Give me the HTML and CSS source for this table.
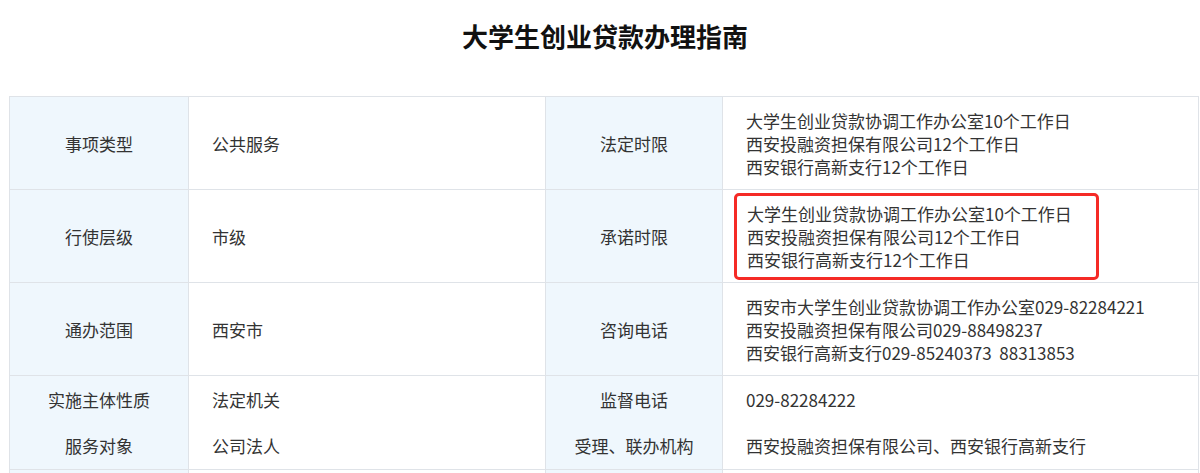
FILE: index.html
```html
<!DOCTYPE html>
<html lang="zh-CN">
<head>
<meta charset="utf-8">
<title>大学生创业贷款办理指南</title>
<link rel="stylesheet" href="styles.css">
</head>
<body>
<div class="page">
  <h1 class="title">大学生创业贷款办理指南</h1>
  <table class="guide">
    <colgroup>
      <col class="c1"><col class="c2"><col class="c3"><col class="c4">
    </colgroup>
    <tbody>
      <tr>
        <th>事项类型</th>
        <td>公共服务</td>
        <th>法定时限</th>
        <td><div class="lines">大学生创业贷款协调工作办公室10个工作日<br>西安投融资担保有限公司12个工作日<br>西安银行高新支行12个工作日</div></td>
      </tr>
      <tr>
        <th>行使层级</th>
        <td>市级</td>
        <th>承诺时限</th>
        <td class="marked"><div class="lines highlight">大学生创业贷款协调工作办公室10个工作日<br>西安投融资担保有限公司12个工作日<br>西安银行高新支行12个工作日</div></td>
      </tr>
      <tr>
        <th>通办范围</th>
        <td>西安市</td>
        <th>咨询电话</th>
        <td><div class="lines">西安市大学生创业贷款协调工作办公室029-82284221<br>西安投融资担保有限公司029-88498237<br>西安银行高新支行029-85240373&nbsp;&nbsp;88313853</div></td>
      </tr>
      <tr class="pair">
        <th><div class="sub">实施主体性质</div><div class="sub">服务对象</div></th>
        <td><div class="sub">法定机关</div><div class="sub">公司法人</div></td>
        <th><div class="sub">监督电话</div><div class="sub">受理、联办机构</div></th>
        <td><div class="sub">029-82284222</div><div class="sub">西安投融资担保有限公司、西安银行高新支行</div></td>
      </tr>
      <tr class="more">
        <th></th><td></td><th></th><td></td>
      </tr>
    </tbody>
  </table>
</div>
</body>
</html>
```

FILE: styles.css
```css
html, body {
  margin: 0;
  padding: 0;
  background: #ffffff;
}

body {
  font-family: "Noto Sans CJK SC", "Microsoft YaHei", "Noto Sans", sans-serif;
  color: #333333;
  font-size: 17px;
  overflow: hidden;
}

.page {
  padding: 18px 3px 0 9px;
}

.title {
  margin: 0 0 42px 0;
  font-size: 26px;
  line-height: 36px;
  font-weight: 700;
  color: #111111;
  text-align: center;
  padding-left: 4px;
}

.guide {
  width: 1189px;
  border-collapse: collapse;
  table-layout: fixed;
}

.c1 { width: 179px; }
.c2 { width: 357px; }
.c3 { width: 177px; }
.c4 { width: 476px; }

.guide th,
.guide td {
  border: 1px solid #dfe3e8;
  height: 92px;
  padding: 0;
  vertical-align: middle;
  font-size: 17px;
  line-height: 23px;
  color: #333333;
}

.guide th {
  background: #eff7fd;
  font-weight: 400;
  text-align: center;
}

.guide td {
  text-align: left;
  padding-left: 23px;
}

.guide td.marked {
  padding-left: 11px;
}

.highlight {
  box-sizing: border-box;
  width: 365px;
  border: 3px solid #f52a26;
  border-radius: 5px;
  padding: 6px 0 6px 10px;
  white-space: nowrap;
}

.pair th,
.pair td {
  height: 93px;
}

.sub {
  line-height: 46px;
}

.more th,
.more td {
  height: 40px;
}
```
